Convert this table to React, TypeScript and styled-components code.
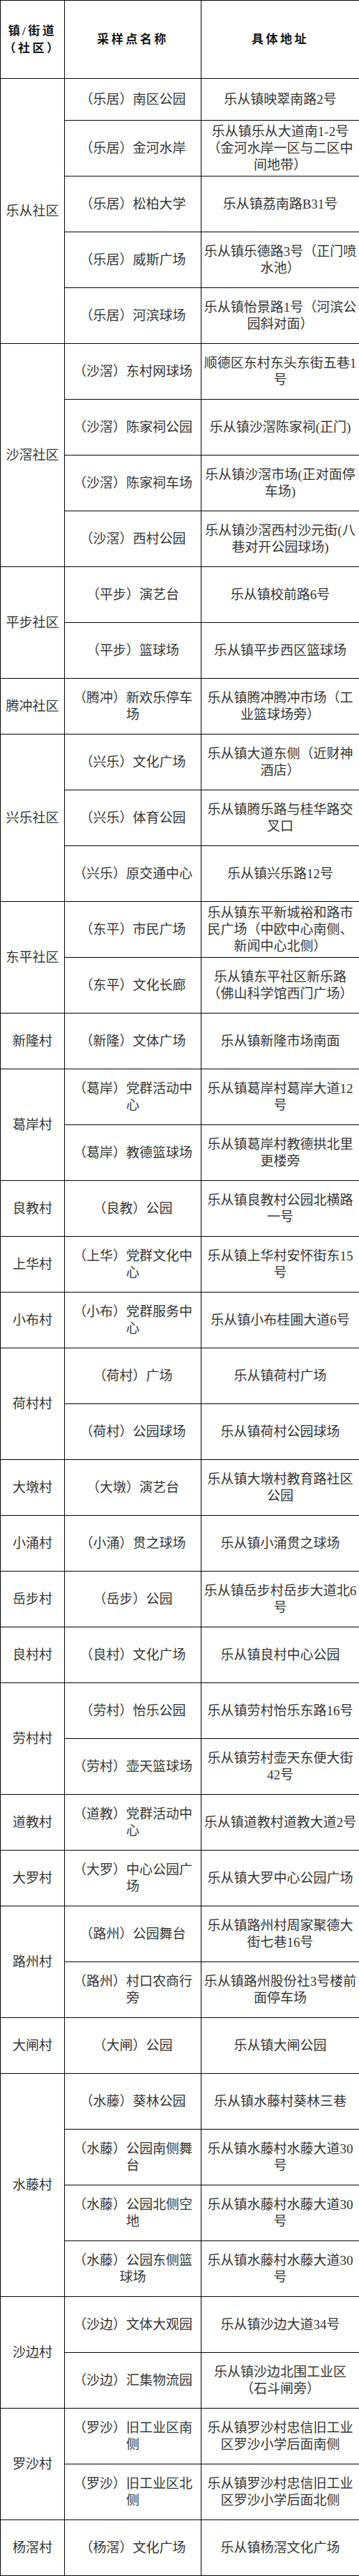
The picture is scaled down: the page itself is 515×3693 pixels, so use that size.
import React from "react";
import styled, { createGlobalStyle } from "styled-components";

const GlobalStyle = createGlobalStyle`
  html, body {
    margin: 0;
    padding: 0;
    background: #ffffff;
  }
  body {
    font-family: "Liberation Serif", "Noto Sans CJK SC", serif;
    -webkit-font-smoothing: antialiased;
  }
`;

type Site = { name: string; addr: string };
type Group = { region: string; sites: Site[] };

const groups: Group[] = [
  {
    region: "乐从社区",
    sites: [
      { name: "（乐居）南区公园", addr: "乐从镇映翠南路2号" },
      { name: "（乐居）金河水岸", addr: "乐从镇乐从大道南1-2号|（金河水岸一区与二区中|间地带）" },
      { name: "（乐居）松柏大学", addr: "乐从镇荔南路B31号" },
      { name: "（乐居）威斯广场", addr: "乐从镇乐德路3号（正门喷|水池）" },
      { name: "（乐居）河滨球场", addr: "乐从镇怡景路1号（河滨公|园斜对面）" },
    ],
  },
  {
    region: "沙滘社区",
    sites: [
      { name: "（沙滘）东村网球场", addr: "顺德区东村东头东街五巷1|号" },
      { name: "（沙滘）陈家祠公园", addr: "乐从镇沙滘陈家祠(正门)" },
      { name: "（沙滘）陈家祠车场", addr: "乐从镇沙滘市场(正对面停|车场)" },
      { name: "（沙滘）西村公园", addr: "乐从镇沙滘西村沙元街(八|巷对开公园球场)" },
    ],
  },
  {
    region: "平步社区",
    sites: [
      { name: "（平步）演艺台", addr: "乐从镇校前路6号" },
      { name: "（平步）篮球场", addr: "乐从镇平步西区篮球场" },
    ],
  },
  {
    region: "腾冲社区",
    sites: [{ name: "（腾冲）新欢乐停车|场", addr: "乐从镇腾冲腾冲市场（工|业篮球场旁）" }],
  },
  {
    region: "兴乐社区",
    sites: [
      { name: "（兴乐）文化广场", addr: "乐从镇大道东侧（近财神|酒店）" },
      { name: "（兴乐）体育公园", addr: "乐从镇腾乐路与桂华路交|叉口" },
      { name: "（兴乐）原交通中心", addr: "乐从镇兴乐路12号" },
    ],
  },
  {
    region: "东平社区",
    sites: [
      { name: "（东平）市民广场", addr: "乐从镇东平新城裕和路市|民广场（中欧中心南侧、|新闻中心北侧）" },
      { name: "（东平）文化长廊", addr: "乐从镇东平社区新乐路|（佛山科学馆西门广场）" },
    ],
  },
  {
    region: "新隆村",
    sites: [{ name: "（新隆）文体广场", addr: "乐从镇新隆市场南面" }],
  },
  {
    region: "葛岸村",
    sites: [
      { name: "（葛岸）党群活动中|心", addr: "乐从镇葛岸村葛岸大道12|号" },
      { name: "（葛岸）教德篮球场", addr: "乐从镇葛岸村教德拱北里|更楼旁" },
    ],
  },
  {
    region: "良教村",
    sites: [{ name: "（良教）公园", addr: "乐从镇良教村公园北横路|一号" }],
  },
  {
    region: "上华村",
    sites: [{ name: "（上华）党群文化中|心", addr: "乐从镇上华村安怀街东15|号" }],
  },
  {
    region: "小布村",
    sites: [{ name: "（小布）党群服务中|心", addr: "乐从镇小布桂圃大道6号" }],
  },
  {
    region: "荷村村",
    sites: [
      { name: "（荷村）广场", addr: "乐从镇荷村广场" },
      { name: "（荷村）公园球场", addr: "乐从镇荷村公园球场" },
    ],
  },
  {
    region: "大墩村",
    sites: [{ name: "（大墩）演艺台", addr: "乐从镇大墩村教育路社区|公园" }],
  },
  {
    region: "小涌村",
    sites: [{ name: "（小涌）贯之球场", addr: "乐从镇小涌贯之球场" }],
  },
  {
    region: "岳步村",
    sites: [{ name: "（岳步）公园", addr: "乐从镇岳步村岳步大道北6|号" }],
  },
  {
    region: "良村村",
    sites: [{ name: "（良村）文化广场", addr: "乐从镇良村中心公园" }],
  },
  {
    region: "劳村村",
    sites: [
      { name: "（劳村）怡乐公园", addr: "乐从镇劳村怡乐东路16号" },
      { name: "（劳村）壶天篮球场", addr: "乐从镇劳村壶天东便大街|42号" },
    ],
  },
  {
    region: "道教村",
    sites: [{ name: "（道教）党群活动中|心", addr: "乐从镇道教村道教大道2号" }],
  },
  {
    region: "大罗村",
    sites: [{ name: "（大罗）中心公园广|场", addr: "乐从镇大罗中心公园广场" }],
  },
  {
    region: "路州村",
    sites: [
      { name: "（路州）公园舞台", addr: "乐从镇路州村周家聚德大|街七巷16号" },
      { name: "（路州）村口农商行|旁", addr: "乐从镇路州股份社3号楼前|面停车场" },
    ],
  },
  {
    region: "大闸村",
    sites: [{ name: "（大闸）公园", addr: "乐从镇大闸公园" }],
  },
  {
    region: "水藤村",
    sites: [
      { name: "（水藤）葵林公园", addr: "乐从镇水藤村葵林三巷" },
      { name: "（水藤）公园南侧舞|台", addr: "乐从镇水藤村水藤大道30|号" },
      { name: "（水藤）公园北侧空|地", addr: "乐从镇水藤村水藤大道30|号" },
      { name: "（水藤）公园东侧篮|球场", addr: "乐从镇水藤村水藤大道30|号" },
    ],
  },
  {
    region: "沙边村",
    sites: [
      { name: "（沙边）文体大观园", addr: "乐从镇沙边大道34号" },
      { name: "（沙边）汇集物流园", addr: "乐从镇沙边北围工业区|（石斗闸旁）" },
    ],
  },
  {
    region: "罗沙村",
    sites: [
      { name: "（罗沙）旧工业区南|侧", addr: "乐从镇罗沙村忠信旧工业|区罗沙小学后面南侧" },
      { name: "（罗沙）旧工业区北|侧", addr: "乐从镇罗沙村忠信旧工业|区罗沙小学后面北侧" },
    ],
  },
  {
    region: "杨滘村",
    sites: [{ name: "（杨滘）文化广场", addr: "乐从镇杨滘文化广场" }],
  },
];

const Sheet = styled.table`
  width: 515px;
  table-layout: fixed;
  border-collapse: collapse;
  border: 1px solid #000;
  font-family: "Liberation Serif", "Noto Sans CJK SC", serif;
  color: #353535;
`;

const Col = styled.col<{ $w: number }>`
  width: ${(p) => p.$w}px;
`;

const HeadRow = styled.tr`
  height: 112px;
`;

const HeadCell = styled.th`
  border: 1px solid #000;
  padding: 0 2px;
  text-align: center;
  vertical-align: middle;
  font-size: 17px;
  font-weight: 700;
  letter-spacing: 3.5px;
  line-height: 25px;
  color: #141414;
`;

const BodyRow = styled.tr<{ $h: number }>`
  height: ${(p) => p.$h}px;
`;

const RegionCell = styled.td`
  border: 1px solid #000;
  padding: 0;
  text-align: center;
  vertical-align: middle;
  font-size: 19px;
  line-height: 24px;
  white-space: nowrap;
`;

const SiteCell = styled.td`
  border: 1px solid #000;
  padding: 0 2px;
  text-align: center;
  vertical-align: middle;
  font-size: 19px;
  line-height: 24px;
`;

const Line = styled.span`
  display: block;
  white-space: nowrap;
`;

const Lines: React.FC<{ text: string }> = ({ text }) => (
  <>
    {text.split("|").map((t, i) => (
      <Line key={i}>{t}</Line>
    ))}
  </>
);

export default function App() {
  let index = 0;
  return (
    <>
      <GlobalStyle />
      <Sheet>
        <colgroup>
          <Col $w={92} />
          <Col $w={196} />
          <Col $w={227} />
        </colgroup>
        <thead>
          <HeadRow>
            <HeadCell>
              镇/街道
              <br />
              （社区）
            </HeadCell>
            <HeadCell>采样点名称</HeadCell>
            <HeadCell>具体地址</HeadCell>
          </HeadRow>
        </thead>
        <tbody>
          {groups.map((g) =>
            g.sites.map((s, i) => {
              const h = index === 0 ? 60 : 80;
              index += 1;
              return (
                <BodyRow key={`${g.region}-${i}`} $h={h}>
                  {i === 0 && <RegionCell rowSpan={g.sites.length}>{g.region}</RegionCell>}
                  <SiteCell>
                    <Lines text={s.name} />
                  </SiteCell>
                  <SiteCell>
                    <Lines text={s.addr} />
                  </SiteCell>
                </BodyRow>
              );
            })
          )}
        </tbody>
      </Sheet>
    </>
  );
}
